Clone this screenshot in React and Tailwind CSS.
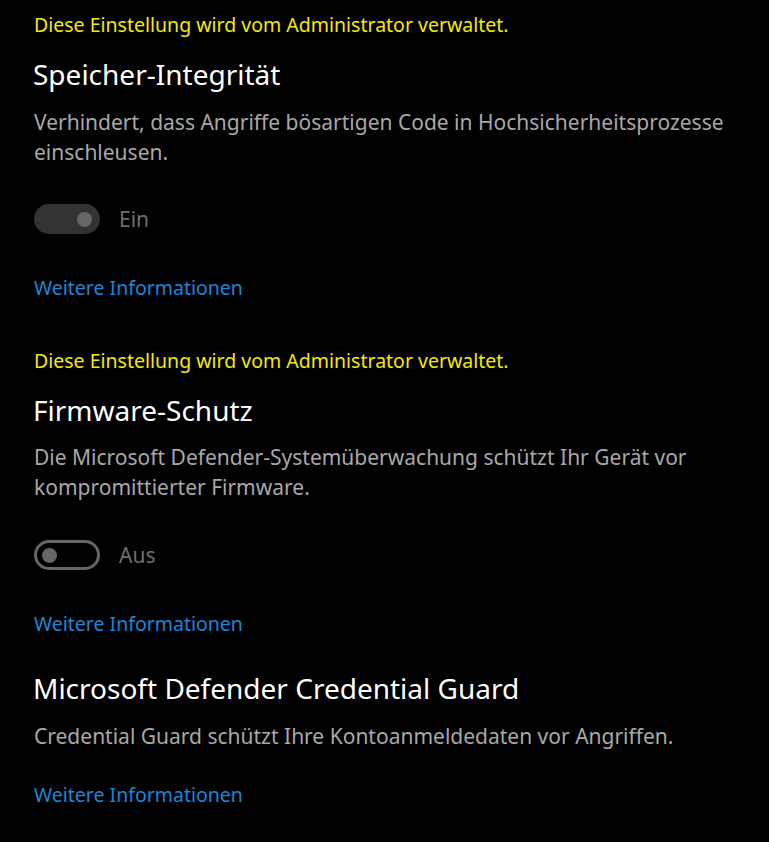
const font = { fontFamily: '"Noto Sans", "Open Sans", sans-serif' };

function Managed() {
  return <div className="text-[19.5px] leading-[24px] text-[#f5ea00]">Diese Einstellung wird vom Administrator verwaltet.</div>;
}

function Toggle({ on, label }) {
  return (
    <div className="flex items-center gap-[19px]">
      {on ? (
        <div className="w-[66px] h-[30px] rounded-full bg-[#333333] flex items-center justify-end pr-[8px]">
          <div className="w-[15px] h-[15px] rounded-full bg-[#666666]" />
        </div>
      ) : (
        <div className="w-[66px] h-[30px] rounded-full border-[3px] border-[#666666] flex items-center pl-[5px]">
          <div className="w-[15px] h-[15px] rounded-full bg-[#666666]" />
        </div>
      )}
      <span className="text-[21px] leading-[30px] text-[#6f6f6f]">{label}</span>
    </div>
  );
}

function Link({ className }) {
  return <a href="#" className={`block text-[19.5px] leading-[24px] text-[#1a86dc] ${className}`}>Weitere Informationen</a>;
}

export default function App() {
  return (
    <div className="min-h-[842px] bg-black px-[34px] pt-[13px]" style={font}>
      <Managed />
      <h2 className="mt-[19px] -ml-[1px] text-[28px] leading-[36px] text-white">Speicher-Integrität</h2>
      <p className="mt-[15px] text-[21px] leading-[30px] text-[#a8a8a8]">
        Verhindert, dass Angriffe bösartigen Code in Hochsicherheitsprozesse<br />einschleusen.
      </p>
      <div className="mt-[37px]"><Toggle on label="Ein" /></div>
      <Link className="mt-[42px]" />

      <div className="mt-[49px]"><Managed /></div>
      <h2 className="mt-[19px] -ml-[1px] text-[28px] leading-[36px] text-white">Firmware-Schutz</h2>
      <p className="mt-[14px] text-[21px] leading-[30px] text-[#a8a8a8]">
        Die Microsoft Defender-Systemüberwachung schützt Ihr Gerät vor<br />kompromittierter Firmware.
      </p>
      <div className="mt-[38px]"><Toggle label="Aus" /></div>
      <Link className="mt-[42px]" />

      <h2 className="mt-[34px] -ml-[1px] text-[28px] leading-[36px] text-white">Microsoft Defender Credential Guard</h2>
      <p className="mt-[15px] text-[21px] leading-[30px] text-[#a8a8a8]">
        Credential Guard schützt Ihre Kontoanmeldedaten vor Angriffen.
      </p>
      <Link className="mt-[32px]" />
    </div>
  );
}
